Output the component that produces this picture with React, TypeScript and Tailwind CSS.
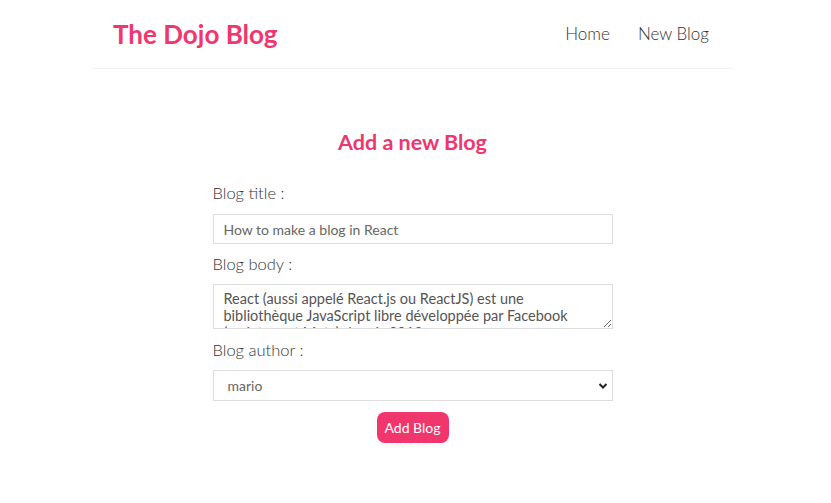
import React from "react";

export default function App() {
  const body =
    "React (aussi appelé React.js ou ReactJS) est une bibliothèque JavaScript libre développée par Facebook (maintenant Meta) depuis 2013.";
  return (
    <div className="min-h-[503px] bg-white text-[#333]" style={{ fontFamily: "Lato, 'Open Sans', sans-serif" }}>
      <div className="w-[825px]">
        <div className="mx-auto w-[641px]">
          <nav className="flex items-center border-b border-[#f2f2f2] px-5 pt-[15px] pb-[15px] h-[69px]">
            <h1 className="text-[26px] font-bold text-[#f1356d] ml-[1px]">The Dojo Blog</h1>
            <div className="ml-auto flex gap-[28px] text-[17px] font-light text-[#333] mr-[4px]">
              <a>Home</a>
              <a>New Blog</a>
            </div>
          </nav>
          <div className="mx-auto w-[400px] text-center pt-[60px]">
            <h2 className="text-[21.5px] font-bold text-[#f1356d] leading-[26px]">Add a new Blog</h2>
            <form className="text-left mt-[28px]">
              <label className="block text-[16.5px] font-light text-[#333] leading-[20px]">Blog title :</label>
              <input
                readOnly
                value="How to make a blog in React"
                className="block w-full mt-[11px] h-[30px] border border-[#ddd] px-[10px] text-[14px] text-[#666] outline-none"
              />
              <label className="block text-[16.5px] font-light text-[#333] leading-[20px] mt-[10px]">Blog body :</label>
              <textarea
                readOnly
                value={body}
                className="block w-full mt-[10px] h-[45px] border border-[#ddd] px-[10px] py-[5px] text-[14.5px] leading-[17px] text-[#555] outline-none resize-y overflow-y-scroll"
              />
              <label className="block text-[16.5px] font-light text-[#333] leading-[20px] mt-[11px]">Blog author :</label>
              <div className="relative mt-[10px]">
                <select className="block w-full h-[31px] border border-[#ddd] px-[14px] text-[14px] text-[#666] outline-none appearance-none bg-white">
                  <option>mario</option>
                  <option>yoshi</option>
                </select>
                <svg className="absolute right-[5px] top-[12px]" width="10" height="8" viewBox="0 0 10 8">
                  <path d="M1.5 2 L5 5.5 L8.5 2" stroke="#222" strokeWidth="2" fill="none" />
                </svg>
              </div>
              <div className="flex justify-center mt-[11px]">
                <button type="button" className="bg-[#f1356d] text-white text-[14px] rounded-[8px] px-[8px] h-[31px] w-[72px]">
                  Add Blog
                </button>
              </div>
            </form>
          </div>
        </div>
      </div>
    </div>
  );
}
